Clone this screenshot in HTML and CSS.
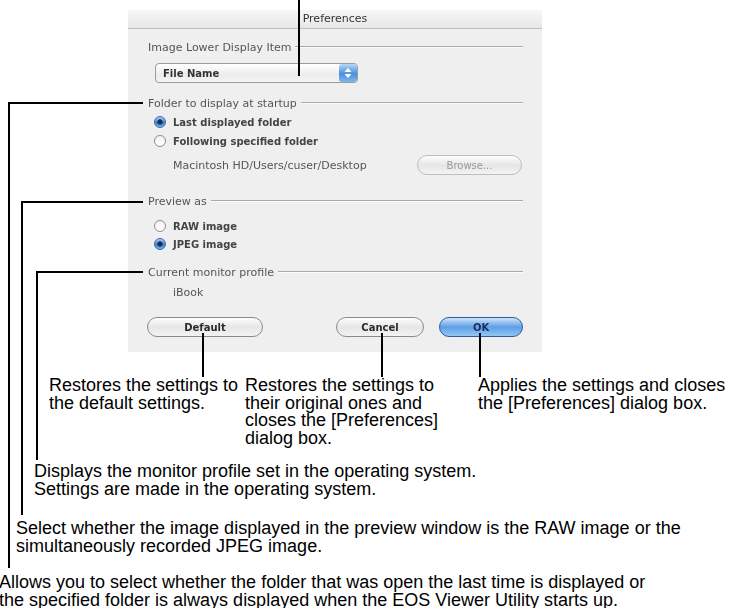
FILE: index.html
```html
<!DOCTYPE html>
<html lang="en">
<head>
<meta charset="utf-8">
<title>Preferences</title>
<link rel="stylesheet" href="styles.css">
</head>
<body>
<div class="page">
  <div class="dialog">
    <div class="titlebar">Preferences</div>
    <div class="dlg-body">
      <div class="group-head g1"><span>Image Lower Display Item</span><i class="rule"></i></div>
      <div class="popup">
        <span class="popup-text">File Name</span>
        <span class="stepper">
          <svg width="10" height="12" viewBox="0 0 10 12"><path d="M5 1 L8.5 5 H1.5 Z M5 11 L8.5 7 H1.5 Z" fill="#fff"/></svg>
        </span>
      </div>
      <div class="group-head g2"><span>Folder to display at startup</span><i class="rule"></i></div>
      <div class="radio on r1"><span class="dot"></span><span>Last displayed folder</span></div>
      <div class="radio r2"><span class="dot"></span><span>Following specified folder</span></div>
      <div class="path-row"><span class="path">Macintosh HD/Users/cuser/Desktop</span><span class="btn browse">Browse...</span></div>
      <div class="group-head g3"><span>Preview as</span><i class="rule"></i></div>
      <div class="radio r3"><span class="dot"></span><span>RAW image</span></div>
      <div class="radio on r4"><span class="dot"></span><span>JPEG image</span></div>
      <div class="group-head g4"><span>Current monitor profile</span><i class="rule"></i></div>
      <div class="profile">iBook</div>
      <div class="buttons">
        <span class="btn default">Default</span>
        <span class="btn cancel">Cancel</span>
        <span class="btn ok">OK</span>
      </div>
    </div>
  </div>

  <div class="callouts">
    <p class="callout c1">Restores the settings to<br>the default settings.</p>
    <p class="callout c2">Restores the settings to<br>their original ones and<br>closes the [Preferences]<br>dialog box.</p>
    <p class="callout c3">Applies the settings and closes<br>the [Preferences] dialog box.</p>
  </div>
  <p class="note n-monitor">Displays the monitor profile set in the operating system.<br>Settings are made in the operating system.</p>
  <p class="note n-preview">Select whether the image displayed in the preview window is the RAW image or the<br>simultaneously recorded JPEG image.</p>
  <p class="note n-folder">Allows you to select whether the folder that was open the last time is displayed or<br>the specified folder is always displayed when the EOS Viewer Utility starts up.</p>

  <svg class="leaders" width="729" height="608" viewBox="0 0 729 608">
    <g fill="none" stroke="#000" stroke-width="2">
      <path d="M299 0 V76"/>
      <path d="M143 103 H9 V568"/>
      <path d="M143 202 H22 V515"/>
      <path d="M143 272 H37 V460"/>
      <path d="M203 333 V377"/>
      <path d="M382 333 V377"/>
      <path d="M480 333 V377"/>
    </g>
  </svg>
</div>
</body>
</html>
```

FILE: styles.css
```css
html, body {
  margin: 0;
  padding: 0;
  background: #fff;
}
body {
  width: 729px;
  height: 608px;
  overflow: hidden;
}
.page {
  position: relative;
  width: 729px;
  height: 608px;
  padding-top: 10px;
  box-sizing: border-box;
}

/* ---------- dialog ---------- */
.dialog {
  margin-left: 128px;
  width: 414px;
  height: 342px;
  background: #efefef;
  font-family: "DejaVu Sans", "Noto Sans", sans-serif;
  color: #444;
  filter: blur(0.35px);
  display: flex;
  flex-direction: column;
}
.titlebar {
  height: 18px;
  line-height: 18px;
  border-bottom: 1px solid #bdbdbd;
  background: linear-gradient(#f7f7f7, #e7e7e7);
  text-align: center;
  font-size: 11px;
  color: #333;
}
.dlg-body {
  padding: 0 19px 0 20px;
  display: flex;
  flex-direction: column;
}
.group-head {
  display: flex;
  align-items: center;
  height: 14px;
  font-size: 11px;
  color: #555;
}
.group-head .rule {
  flex: 1;
  height: 0;
  margin-left: 4px;
  border-top: 1px solid #a8a8a8;
  border-bottom: 1px solid #fbfbfb;
}
.g1 { margin-top: 11px; }
.g2 { margin-top: 13px; }
.g3 { margin-top: 19px; }
.g4 { margin-top: 13px; }

.popup {
  margin-top: 9px;
  margin-left: 7px;
  width: 203px;
  height: 20px;
  box-sizing: border-box;
  border: 1px solid #9c9c9c;
  border-radius: 4px;
  background: linear-gradient(#ffffff, #ececec 60%, #f4f4f4);
  display: flex;
  align-items: center;
  justify-content: space-between;
}
.popup-text {
  margin-left: 7px;
  font-size: 10px;
  font-weight: bold;
  color: #333;
}
.stepper {
  width: 18px;
  height: 18px;
  border-radius: 3px;
  background: linear-gradient(#b6d7f7, #4b8fdc 55%, #7fb7ee);
  display: flex;
  align-items: center;
  justify-content: center;
}

.radio {
  display: flex;
  align-items: center;
  height: 16px;
  margin-left: 6px;
  font-size: 10px;
  font-weight: bold;
  color: #444;
}
.r1 { margin-top: 4px; }
.r2 { margin-top: 3px; }
.r3 { margin-top: 10px; }
.r4 { margin-top: 2px; }
.dot {
  width: 12px;
  height: 12px;
  box-sizing: border-box;
  border-radius: 50%;
  margin-right: 7px;
  border: 1px solid #8c8c8c;
  background: linear-gradient(#f4f4f4, #ffffff);
}
.radio.on .dot {
  border-color: #3b6aa8;
  background:
    radial-gradient(circle, #15335f 0 2.4px, transparent 3px),
    linear-gradient(#a9cdf2, #3f80d0 60%, #7fb5ec);
}

.path-row {
  margin-top: 6px;
  height: 20px;
  display: flex;
  align-items: center;
  justify-content: space-between;
  padding-right: 1px;
}
.path {
  margin-left: 25px;
  font-size: 11px;
  color: #555;
}
.profile {
  margin-top: 7px;
  margin-left: 25px;
  height: 14px;
  line-height: 14px;
  font-size: 11px;
  color: #555;
}

.btn {
  height: 20px;
  box-sizing: border-box;
  border-radius: 10px;
  border: 1px solid #8a8a8a;
  background: linear-gradient(#fefefe, #e6e6e6 50%, #f3f3f3);
  display: flex;
  align-items: center;
  justify-content: center;
  font-size: 10px;
  font-weight: bold;
  color: #2c2c2c;
}
.browse {
  width: 105px;
  border-color: #bdbdbd;
  font-weight: normal;
  color: #9a9a9a;
}
.buttons {
  margin-top: 17px;
  display: flex;
  align-items: center;
}
.default { width: 116px; margin-left: -1px; }
.cancel { width: 88px; margin-left: auto; }
.ok {
  width: 84px;
  margin-left: 15px;
  border-color: #2f5b98;
  background: linear-gradient(#cfe5fb, #5e9fe6 50%, #93c6f4);
  color: #15305a;
}

/* ---------- callouts ---------- */
.callouts {
  display: flex;
  margin-top: 25px;
}
.callout,
.note {
  margin: 0;
  font-family: "Liberation Sans", Arial, sans-serif;
  font-size: 18px;
  line-height: 17.5px;
  color: #000;
  white-space: nowrap;
}
.callout.c1 { margin-left: 49px; width: 196px; }
.callout.c2 { width: 233px; }
.note.n-monitor { margin-top: 16px; margin-left: 34px; }
.note.n-preview { margin-top: 22px; margin-left: 16px; }
.note.n-folder { margin-top: 19px; margin-left: -1px; }

.leaders {
  position: absolute;
  left: 0;
  top: 0;
  pointer-events: none;
}
```
